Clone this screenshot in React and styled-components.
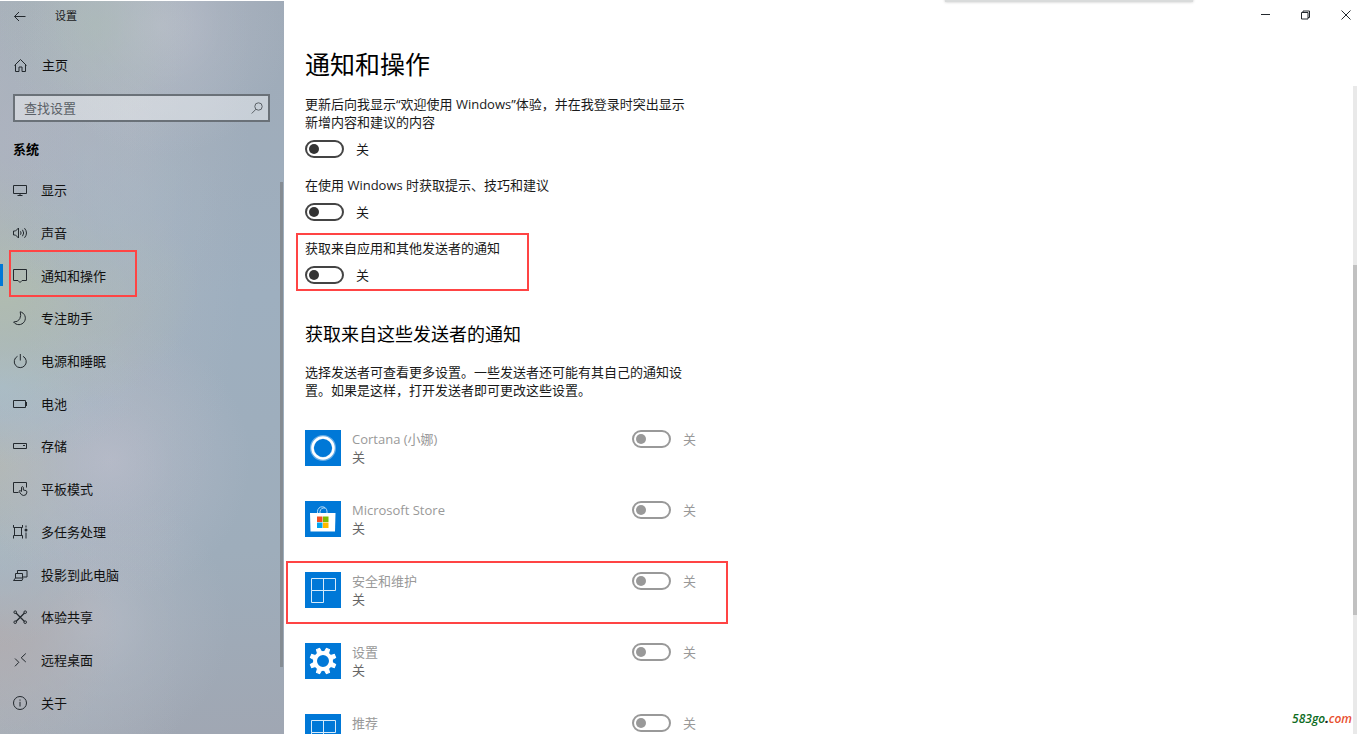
import React, {useState} from 'react';
import styled, {createGlobalStyle, css} from 'styled-components';


const GlobalStyle = createGlobalStyle`
    *, *::before, *::after {
        box-sizing: border-box;
    }

    body {
        margin: 0;
        background: #fff;
        color: #1a1a1a;
        font-family: "Open Sans", "Noto Sans CJK SC", sans-serif;
        font-size: 13px;
        font-weight: 400;
        line-height: 18px;
    }

    button, input {
        font: inherit;
        color: inherit;
    }
`;

const Window = styled.div`
    display: flex;
    height: 100vh;
    padding-top: 1px;
    position: relative;
    overflow: hidden;
`;

const highlight = css`
    position: relative;

    &::after {
        content: "";
        position: absolute;
        border: 2px solid #f44;
        pointer-events: none;
    }
`;

/* sidebar */

const Sidebar = styled.aside`
    flex: 0 0 284px;
    display: flex;
    flex-direction: column;
    background:
        radial-gradient(circle at 95px 25px, rgba(172, 188, 182, 0.6), rgba(172, 188, 182, 0.3) 40px, transparent 100px),
        radial-gradient(circle at 160px 25px, rgba(186, 191, 203, 0.8), rgba(186, 191, 203, 0.3) 60px, transparent 130px),
        radial-gradient(ellipse at 130px 110px, rgba(178, 184, 194, 0.5), transparent 120px),
        radial-gradient(circle at 20px 140px, rgba(176, 180, 193, 0.6), transparent 140px),
        radial-gradient(circle at 110px 205px, rgba(160, 180, 196, 0.7), transparent 110px),
        radial-gradient(ellipse 200px 130px at 0 290px, rgba(176, 188, 176, 1), rgba(176, 188, 176, 0.5) 50%, transparent),
        radial-gradient(ellipse 140px 80px at 0 385px, rgba(168, 188, 204, 1), rgba(168, 188, 204, 0.4) 50%, transparent),
        radial-gradient(circle at 110px 460px, rgba(183, 187, 201, 0.9), rgba(183, 187, 201, 0.4) 60px, transparent 140px),
        radial-gradient(circle at 0 460px, rgba(178, 184, 180, 1), transparent 110px),
        radial-gradient(circle at 0 545px, rgba(166, 184, 197, 0.8), transparent 100px),
        radial-gradient(circle at 0 630px, rgba(176, 173, 177, 1), transparent 120px),
        radial-gradient(circle at 90px 620px, rgba(180, 186, 197, 0.9), rgba(180, 186, 197, 0.4) 60px, transparent 140px),
        linear-gradient(90deg, rgba(172, 180, 188, 0.7), transparent 180px),
        linear-gradient(#a0abb8, #9eafbf 40%, #9eadbb 75%, #a0a7b3);
`;

const TitleBar = styled.div`
    display: flex;
    align-items: center;
    gap: 29px;
    height: 30px;
    padding-left: 13px;
    font-size: 11px;
`;

const IconButton = styled.button`
    display: flex;
    padding: 0;
    border: 0;
    background: none;
`;

const NavLink = styled.a`
    display: flex;
    align-items: center;
    gap: 13px;
    height: 100%;
    padding-left: 12px;
    color: #111;
    text-decoration: none;
`;

const Home = styled.div`
    height: 28px;
    margin-top: 20px;
`;

const Search = styled.label`
    display: flex;
    align-items: center;
    height: 28px;
    margin: 15px 14px 0 13px;
    padding: 0 5px 0 9px;
    border: 2px solid #6a7178;
    background: rgba(255, 255, 255, 0.42);
`;

const SearchInput = styled.input`
    flex: 1;
    min-width: 0;
    padding: 0;
    border: 0;
    outline: 0;
    background: none;

    &::placeholder {
        color: #5b6167;
        opacity: 1;
    }
`;

const Group = styled.h2`
    margin: 18px 0 0 13px;
    font-size: 13px;
    font-weight: 700;
    line-height: 18px;
    color: #000;
`;

const NavArea = styled.nav`
    flex: 1;
    min-height: 0;
    display: flex;
    margin-top: 11px;
`;

const NavList = styled.ul`
    flex: 1;
    display: flex;
    flex-direction: column;
    margin: 0;
    padding: 0 0 10px;
    list-style: none;
`;

const NavItem = styled.li`
    flex: 1;
    min-height: 40px;

    ${props => props.$active && css`
        ${highlight}

        &::before {
            content: "";
            position: absolute;
            left: 0;
            top: 10px;
            width: 3px;
            height: 22px;
            background: #0078d7;
        }

        &::after {
            top: -4px;
            bottom: 0;
            left: 9px;
            width: 128px;
        }
    `}
`;

const SideScroll = styled.div`
    width: 3px;
    margin: 13px 1px 67px 0;
    background: #858c93;
`;

/* main pane */

const Main = styled.main`
    flex: 1;
    min-width: 0;
    display: flex;
    flex-direction: column;
`;

const Controls = styled.div`
    display: flex;
    justify-content: flex-end;
    align-items: center;
    gap: 30px;
    flex: 0 0 28px;
    padding-right: 6px;
`;

const Body = styled.div`
    flex: 1;
    min-height: 0;
    display: flex;
`;

const Content = styled.div`
    flex: 1;
    min-width: 0;
    padding: 19px 21px 0;
    overflow: hidden;
`;

const Title = styled.h1`
    margin: 0 0 15px;
    font-size: 25px;
    font-weight: 400;
    line-height: 32px;
    color: #000;
`;

const Setting = styled.div`
    max-width: 396px;
    margin-bottom: 18px;

    ${props => props.$marked && css`
        ${highlight}

        &::after {
            top: -6px;
            bottom: -7px;
            left: -9px;
            width: 233px;
        }
    `}
`;

const Text = styled.p`
    margin: 0;
    max-width: 396px;
`;

const SwitchLabel = styled.label`
    display: flex;
    align-items: center;
    gap: 12px;
    margin-top: ${props => props.$inline ? '0' : '9px'};
    color: ${props => props.$off ? '#999' : '#1a1a1a'};
`;

const Switch = styled.input`
    appearance: none;
    position: relative;
    width: 39px;
    height: 18px;
    margin: 0;
    border: 2px solid #444;
    border-radius: 9px;

    &::before {
        content: "";
        position: absolute;
        top: 2px;
        left: 2px;
        width: 10px;
        height: 10px;
        border-radius: 50%;
        background: #333;
    }

    &:checked {
        border-color: #0078d7;
        background: #0078d7;
    }

    &:checked::before {
        left: 23px;
        background: #fff;
    }

    &:disabled {
        border-color: #999;
    }

    &:disabled::before {
        background: #999;
    }
`;

const SubTitle = styled.h2`
    margin: 38px 0 17px;
    font-size: 18px;
    font-weight: 400;
    line-height: 24px;
    color: #000;
`;

const SenderList = styled.ul`
    margin: 31px 0 0;
    padding: 0;
    list-style: none;
`;

const Sender = styled.li`
    display: flex;
    align-items: flex-start;
    max-width: 396px;
    height: 36px;
    margin-bottom: 35px;
    padding-right: 5px;

    ${props => props.$marked && css`
        ${highlight}

        &::after {
            top: -11px;
            bottom: -16px;
            left: -19px;
            right: -27px;
        }
    `}
`;

const SenderText = styled.div`
    flex: 1;
    margin-left: 11px;
    color: #666;
`;

const SenderName = styled.div`
    color: #999;
`;

const Scrollbar = styled.div`
    flex: 0 0 4px;
    margin-top: 57px;
    background: #e9e9e9;
    padding-top: 179px;
`;

const Thumb = styled.div`
    height: 75%;
    max-height: 350px;
    background: #c1c1c1;
`;

const TopTab = styled.div`
    position: absolute;
    top: -3px;
    right: 164px;
    width: 248px;
    height: 5px;
    background: #d9dbdb;
    box-shadow: 0 0 3px rgba(0, 0, 0, 0.25);
`;

const SiteMark = styled.div`
    position: absolute;
    right: 5px;
    bottom: 6px;
    font-family: "Open Sans", sans-serif;
    font-size: 12px;
    font-style: italic;
    font-weight: 600;
    color: #0b6b22;

    b {
        color: #222;
    }

    span {
        color: #e8502f;
    }
`;

const Icon = ({size = 16, children}) => (
    <svg width={size} height={size} viewBox={`0 0 ${size} ${size}`} fill="none" stroke="#23292e" strokeWidth="1" aria-hidden="true">
        {children}
    </svg>
);

const navItems = [
    {
        text: '显示',
        icon: <path d="M1.5 3.5h13v8h-13zM8 11.5v2M5.5 13.5h5"/>,
    },
    {
        text: '声音',
        icon: <path d="M1.5 6h2l3-3v10l-3-3h-2zM8.5 6.3q1.2 1.7 0 3.4M10.5 4.8q2.4 3.2 0 6.4M12.5 3.2q4 4.8 0 9.6"/>,
    },
    {
        text: '通知和操作',
        active: true,
        icon: <path d="M1.5 1.5h13v11h-4.5l-2 2-2-2h-4.5z"/>,
    },
    {
        text: '专注助手',
        icon: <path d="M8.2 1.8a6.5 6.5 0 1 1-6.6 10.2q4.4.3 6.2-3.3q1.6-3.2.4-6.9z"/>,
    },
    {
        text: '电源和睡眠',
        icon: <path d="M5.5 3.3a6 6 0 1 0 5.5 0M8.3 1v6.5"/>,
    },
    {
        text: '电池',
        icon: <path d="M1.5 4.5h12v7h-12zM14.5 6v4"/>,
    },
    {
        text: '存储',
        icon: <path d="M1.5 5.5h13v5h-13zM11 7.5h2"/>,
    },
    {
        text: '平板模式',
        icon: <path d="M6.5 11.5h-5v-10h13v5M9.5 10.5v-4.300q.9-1.300 1.800 0v2.800l2.700.6q1 .4.9 1.500q-.2 3.400-3.200 3.400q-2.200 0-3.700-2.700l-1-1.500q.6-1.100 1.700-.4z"/>,
    },
    {
        text: '多任务处理',
        icon: (
            <g>
                <path d="M1.5 1v2.500h9v-2.500M2.500 3.500v8M9.500 3.500v8M1.500 14.500v-3h9v3M14 1.500v2M14 8.500v6"/>
                <circle cx="14" cy="6" r="1.500" fill="#23292e" stroke="none"/>
            </g>
        ),
    },
    {
        text: '投影到此电脑',
        icon: <path d="M5.500 6v-2.500h9.500v6.500h-4M3.500 6.500h7v4.500h-7zM3.500 11l-2 2.500h8.500l1-2.500"/>,
    },
    {
        text: '体验共享',
        icon: (
            <g>
                <path d="M4 4l8.500 8.500M12.500 4l-8.500 8.500" strokeWidth="1.300"/>
                <circle cx="3.200" cy="3.200" r="1.300"/>
                <circle cx="13.200" cy="3.200" r="1.300"/>
                <circle cx="3.200" cy="13.200" r="1.300"/>
                <circle cx="13.200" cy="13.200" r="1.300"/>
            </g>
        ),
    },
    {
        text: '远程桌面',
        icon: <path d="M3 6.500l3.800 3.800-3.800 4M13.800 1.500l-4.600 4.300 4.600 4.200"/>,
    },
    {
        text: '关于',
        icon: (
            <g>
                <circle cx="8" cy="8" r="6.500"/>
                <path d="M8 6.800v4.700M8 4.500v1.200"/>
            </g>
        ),
    },
];

const squares = <path d="M6.500 6.500h24v12h-24zM18.500 6.500v24h-12v-12" stroke="#d8ebfa"/>;

const senders = [
    {
        name: 'Cortana (小娜)',
        icon: (
            <g stroke="#fff">
                <circle cx="18" cy="18" r="11" strokeWidth="4" opacity="0.4"/>
                <circle cx="18" cy="18" r="10.5" strokeWidth="2.5"/>
            </g>
        ),
    },
    {
        name: 'Microsoft Store',
        icon: (
            <g stroke="none">
                <path d="M12.5 12v-1.500a4.500 4.500 0 0 1 9.500 0v1.500M15 12v-1.500a4.500 4.500 0 0 1 5-3.500" stroke="#b9dcf6"/>
                <path d="M5 12h25.500l-.5 18.500h-24.500z" fill="#fff"/>
                <path d="M12 15.500h5.500v5.500h-5.500z" fill="#f25022"/>
                <path d="M18 15.500h5.500v5.500h-5.500z" fill="#7fba00"/>
                <path d="M12 21.500h5.500v5.500h-5.500z" fill="#00a4ef"/>
                <path d="M18 21.500h5.500v5.500h-5.500z" fill="#ffb900"/>
            </g>
        ),
    },
    {name: '安全和维护', marked: true, icon: squares},
    {
        name: '设置',
        icon: (
            <g stroke="#fff">
                <circle cx="18" cy="18" r="8" strokeWidth="4"/>
                {[22.5, 67.5, 112.5, 157.5, 202.5, 247.5, 292.5, 337.5].map(a => (
                    <path key={a} d="M15.8 9l.5-4h3.4l.5 4z" fill="#fff" transform={`rotate(${a} 18 18)`}/>
                ))}
            </g>
        ),
    },
    {name: '推荐', icon: squares},
];

const Toggle = ({labelledby, disabled, inline}) => {
    const [on, setOn] = useState(false);
    return (
        <SwitchLabel $off={disabled} $inline={inline}>
            <Switch
                type="checkbox"
                role="switch"
                aria-describedby={labelledby}
                checked={on}
                disabled={disabled}
                onChange={e => setOn(e.target.checked)}
            />
            {on ? '开' : '关'}
        </SwitchLabel>
    );
};

export default function App() {
    const [query, setQuery] = useState('');

    return (
        <Window>
            <GlobalStyle/>
            <Sidebar>
                <TitleBar>
                    <IconButton type="button" aria-label="返回">
                        <Icon size={13}><path d="M12.5 6.5h-11M6 2l-4.500 4.500 4.500 4.500"/></Icon>
                    </IconButton>
                    <span>设置</span>
                </TitleBar>
                <Home>
                    <NavLink href="#home">
                        <Icon size={17}>
                            <path d="M2.500 8.500l6-6 6 6M3.500 7.500v7h3.500v-4.500h3v4.500h3.500v-7"/>
                        </Icon>
                        主页
                    </NavLink>
                </Home>
                <Search>
                    <SearchInput
                        type="text"
                        placeholder="查找设置"
                        value={query}
                        onChange={e => setQuery(e.target.value)}
                    />
                    <Icon size={12}>
                        <circle cx="7.500" cy="4.500" r="3.700" stroke="#5b6167"/>
                        <path d="M5 7.200l-4.300 4.300" stroke="#5b6167"/>
                    </Icon>
                </Search>
                <Group>系统</Group>
                <NavArea>
                    <NavList>
                        {navItems.map((item, i) => (
                            <NavItem key={item.text} $active={item.active}>
                                <NavLink href={`#page-${i}`}>
                                    <Icon>{item.icon}</Icon>
                                    {item.text}
                                </NavLink>
                            </NavItem>
                        ))}
                    </NavList>
                    <SideScroll/>
                </NavArea>
            </Sidebar>

            <Main>
                <Controls>
                    <IconButton type="button" aria-label="最小化">
                        <Icon size={10}><path d="M0 4.500h9"/></Icon>
                    </IconButton>
                    <IconButton type="button" aria-label="还原">
                        <Icon size={10}><path d="M.5 2.500h6.500v6.500h-6.500zM2 2.500v-1.500h6.500v6.500h-1.500"/></Icon>
                    </IconButton>
                    <IconButton type="button" aria-label="关闭">
                        <Icon size={10}><path d="M.5.5l9 9M9.500.5l-9 9"/></Icon>
                    </IconButton>
                </Controls>
                <Body>
                    <Content>
                        <Title>通知和操作</Title>
                        <Setting>
                            <Text id="welcome">更新后向我显示“欢迎使用 Windows”体验，并在我登录时突出显示<br/>新增内容和建议的内容</Text>
                            <Toggle labelledby="welcome"/>
                        </Setting>
                        <Setting>
                            <Text id="tips">在使用 Windows 时获取提示、技巧和建议</Text>
                            <Toggle labelledby="tips"/>
                        </Setting>
                        <Setting $marked>
                            <Text id="apps">获取来自应用和其他发送者的通知</Text>
                            <Toggle labelledby="apps"/>
                        </Setting>

                        <SubTitle>获取来自这些发送者的通知</SubTitle>
                        <Text>选择发送者可查看更多设置。一些发送者还可能有其自己的通知设<br/>置。如果是这样，打开发送者即可更改这些设置。</Text>
                        <SenderList>
                            {senders.map((sender, i) => (
                                <Sender key={sender.name} $marked={sender.marked}>
                                    <Icon size={36}>
                                        <path d="M0 0h36v36H0z" fill="#0078d7" stroke="none"/>
                                        {sender.icon}
                                    </Icon>
                                    <SenderText>
                                        <SenderName id={`sender-${i}`}>{sender.name}</SenderName>
                                        关
                                    </SenderText>
                                    <Toggle labelledby={`sender-${i}`} disabled inline/>
                                </Sender>
                            ))}
                        </SenderList>
                    </Content>
                    <Scrollbar>
                        <Thumb/>
                    </Scrollbar>
                </Body>
            </Main>
            <TopTab/>
            <SiteMark>583go<b>.</b><span>com</span></SiteMark>
        </Window>
    );
}
